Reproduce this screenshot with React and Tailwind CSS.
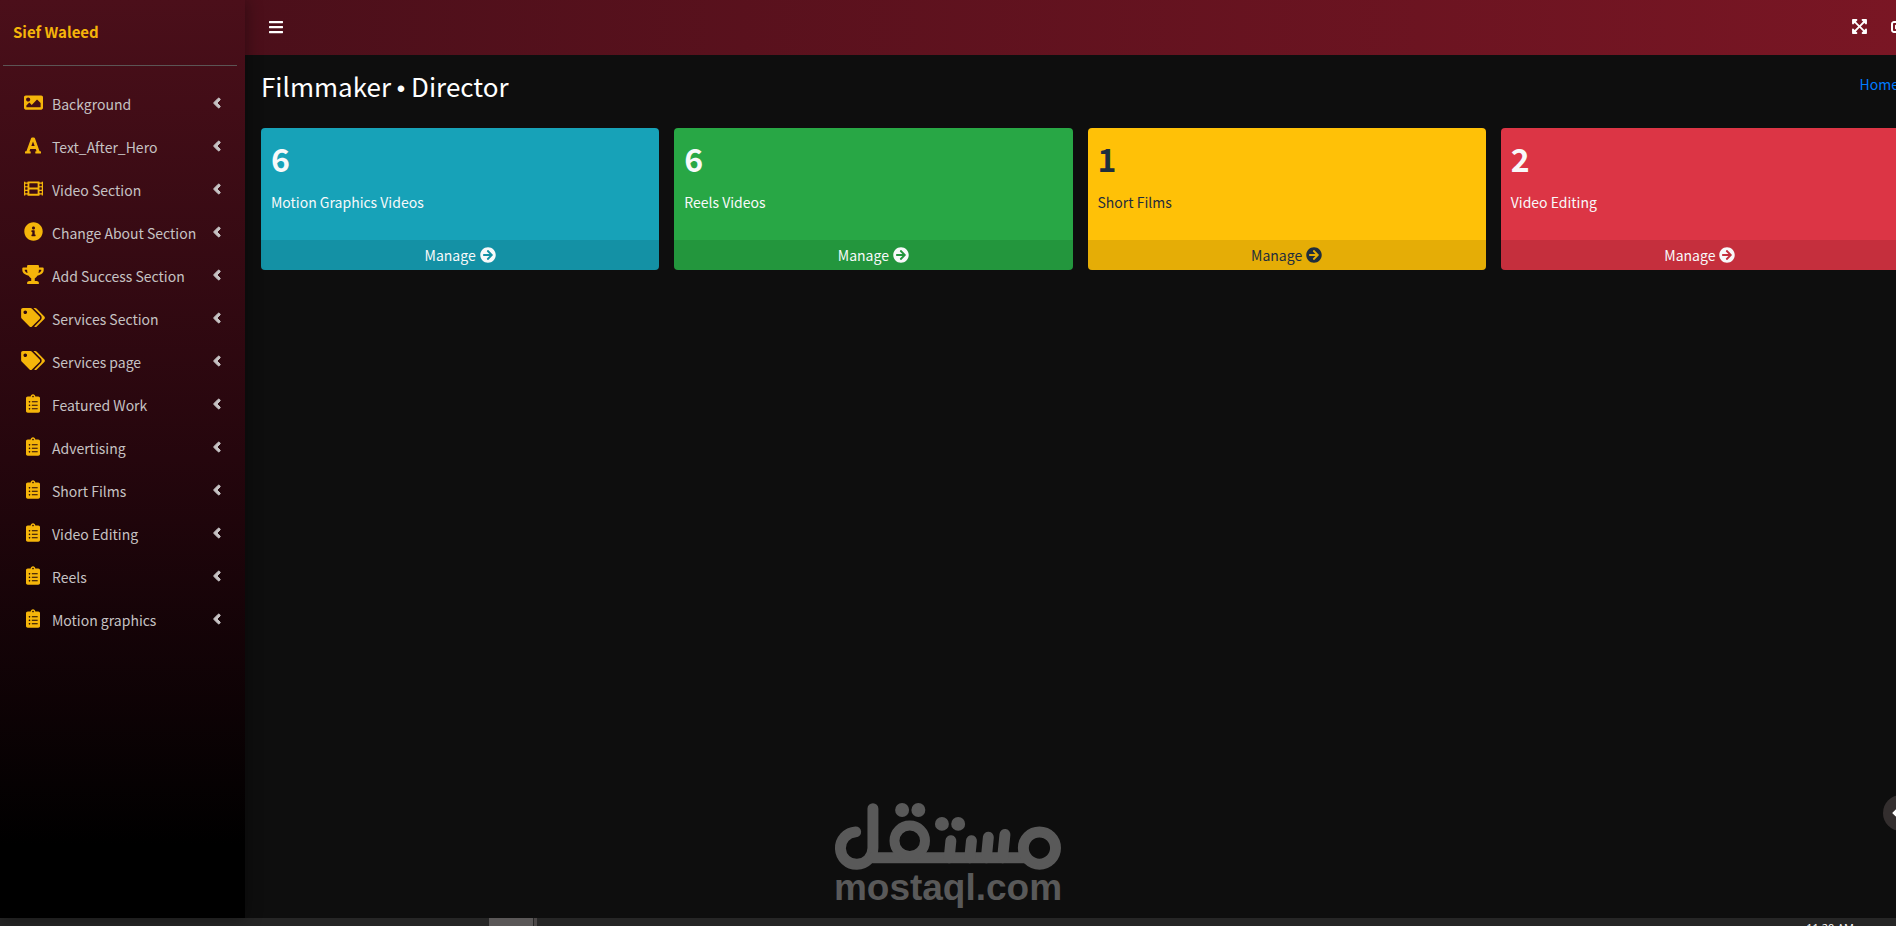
import React from "react";
import {
  FaAngleLeft,
  FaArrowCircleRight,
  FaBars,
  FaCaretLeft,
  FaClipboardList,
  FaExpandArrowsAlt,
  FaFilm,
  FaFont,
  FaImage,
  FaInfoCircle,
  FaSignOutAlt,
  FaTags,
  FaTrophy,
} from "react-icons/fa";

const menu = [
  { label: "Background", icon: FaImage, size: "w-[19px]" },
  { label: "Text_After_Hero", icon: FaFont, size: "w-4" },
  { label: "Video Section", icon: FaFilm, size: "w-[19px]" },
  { label: "Change About Section", icon: FaInfoCircle, size: "w-[19px]" },
  { label: "Add Success Section", icon: FaTrophy, size: "w-[22px]" },
  { label: "Services Section", icon: FaTags, size: "w-6" },
  { label: "Services page", icon: FaTags, size: "w-6" },
  { label: "Featured Work", icon: FaClipboardList, size: "w-[14px]" },
  { label: "Advertising", icon: FaClipboardList, size: "w-[14px]" },
  { label: "Short Films", icon: FaClipboardList, size: "w-[14px]" },
  { label: "Video Editing", icon: FaClipboardList, size: "w-[14px]" },
  { label: "Reels", icon: FaClipboardList, size: "w-[14px]" },
  { label: "Motion graphics", icon: FaClipboardList, size: "w-[14px]" },
];

const stats = [
  { count: 6, label: "Motion Graphics Videos", color: "bg-[#17a2b8] text-[#f8f9fa]" },
  { count: 6, label: "Reels Videos", color: "bg-[#28a745] text-[#f8f9fa]" },
  { count: 1, label: "Short Films", color: "bg-[#ffc107] text-[#1f2d3d]" },
  { count: 2, label: "Video Editing", color: "bg-[#dc3545] text-[#f8f9fa]" },
];

const Sidebar = () => (
  <aside className="relative z-10 w-[245px] shrink-0 bg-linear-to-b/srgb from-[#4b0f1a] via-[#25060d] via-50% to-black to-92% shadow-[0_0_16px_rgba(0,0,0,0.4)]">
    <div className="ml-[3px] mr-2 flex h-[66px] items-center border-b border-[#5c5555] px-[10px]">
      <a href="#" className="text-[15px] font-bold text-[#f5b50a]">
        Sief Waleed
      </a>
    </div>
    <nav className="mt-[18px] px-2">
      <ul className="flex flex-col gap-[3px]">
        {menu.map(({ label, icon: Icon, size }) => (
          <li key={label}>
            <a href="#" className="flex h-10 items-center pl-3 pr-4 text-[#c6c2c3]">
              <span className="mb-[3px] flex w-[26px] shrink-0 justify-center text-[#f5b50a]">
                <Icon className={`h-[19px] shrink-0 ${size}`} />
              </span>
              <span className="ml-[6px] flex-1 whitespace-nowrap text-[14px]">
                {label}
              </span>
              <FaAngleLeft className="mb-[3px] h-4 w-2 shrink-0" strokeWidth={32} />
            </a>
          </li>
        ))}
      </ul>
    </nav>
  </aside>
);

const StatCard = ({ count, label, color }) => (
  <div className={`flex flex-col overflow-hidden rounded ${color}`}>
    <div className="h-28 px-[10px] pt-2">
      <h3 className="text-[32px] font-bold leading-[44px]">{count}</h3>
      <p className="mt-[10px] text-[14px] leading-6">{label}</p>
    </div>
    <a
      href="#"
      className="flex h-[30px] items-center justify-center gap-1 bg-black/10 text-[14px]"
    >
      Manage <FaArrowCircleRight className="h-4 w-4" />
    </a>
  </div>
);

const Watermark = () => (
  <div className="pointer-events-none absolute bottom-5 left-1/2 flex -translate-x-1/2 flex-col items-center text-[#595959]">
    <svg viewBox="42 36 684 202" className="h-[67px] w-[228px]" aria-hidden="true">
      <g fill="none" stroke="currentColor" strokeWidth="33" strokeLinecap="round">
        <path d="M158 53 V172 A49 49 0 1 1 106 123" />
        <path d="M158 201 H620" />
        <circle cx="660" cy="172" r="48.5" />
        <circle cx="269" cy="150" r="46" strokeWidth="30" />
        <path d="M393 150 L388 201 M455 150 L450 201 M506 139 L500 201 M556 131 L549 201" />
      </g>
      <g fill="currentColor">
        <circle cx="246" cy="57" r="21" />
        <circle cx="295" cy="57" r="21" />
        <circle cx="366" cy="99" r="21" />
        <circle cx="415" cy="99" r="21" />
      </g>
    </svg>
    <span className="font-['Liberation_Sans',sans-serif] text-[37px] font-bold leading-9">
      mostaql.com
    </span>
  </div>
);

const Taskbar = () => (
  <footer className="relative flex h-2 shrink-0 overflow-hidden bg-[#262626]">
    <div className="ml-[489px] h-full w-11 bg-[#5a5757]" />
    <div className="ml-px h-full w-[3px] bg-[#4a4646]" />
    <time className="ml-auto mr-[42px] mt-1 whitespace-nowrap font-['Open_Sans',sans-serif] text-[11px] leading-3 text-white">
      11:20 AM
    </time>
  </footer>
);

const App = () => (
  <div className="relative flex h-screen flex-col overflow-hidden bg-[#0e0e0e] font-['Noto_Sans_CJK_SC',sans-serif]">
    <div className="flex min-h-0 flex-1">
      <Sidebar />
      {/* The content column runs past the right edge of the window */}
      <div className="-mr-[19px] flex min-w-0 flex-1 flex-col">
        <header className="flex h-[55px] shrink-0 items-center justify-between bg-linear-to-r/srgb from-[#4b0f1a] to-[#7a1624] pb-0.5 pl-6 pr-2 text-white">
          <button aria-label="Toggle menu">
            <FaBars className="h-4 w-[14px]" />
          </button>
          <div className="flex items-center gap-6">
            <button aria-label="Fullscreen">
              <FaExpandArrowsAlt className="h-[17px] w-[15px]" />
            </button>
            <button aria-label="Sign out">
              <FaSignOutAlt className="h-4 w-4" />
            </button>
          </div>
        </header>
        <main className="flex-1 px-4">
          <div className="flex h-[73px] items-start justify-between">
            <h1 className="mt-[11px] text-[26px] leading-10 text-white">
              Filmmaker <span className="font-['Liberation_Sans',sans-serif] text-2xl leading-10">•</span> Director
            </h1>
            <a href="#" className="mt-[17px] text-[14px] leading-6 text-[#007bff]">
              Home
            </a>
          </div>
          <section className="grid grid-cols-4 gap-[15px]">
            {stats.map((stat) => (
              <StatCard key={stat.label} {...stat} />
            ))}
          </section>
        </main>
      </div>
      <button
        aria-label="Open panel"
        className="absolute -right-[23px] bottom-[95px] z-10 flex h-9 w-9 items-center rounded-full bg-[#332e2e] pl-2 text-white"
      >
        <FaCaretLeft className="h-3 w-[6px]" />
      </button>
      <Watermark />
    </div>
    <Taskbar />
  </div>
);

export default App;
